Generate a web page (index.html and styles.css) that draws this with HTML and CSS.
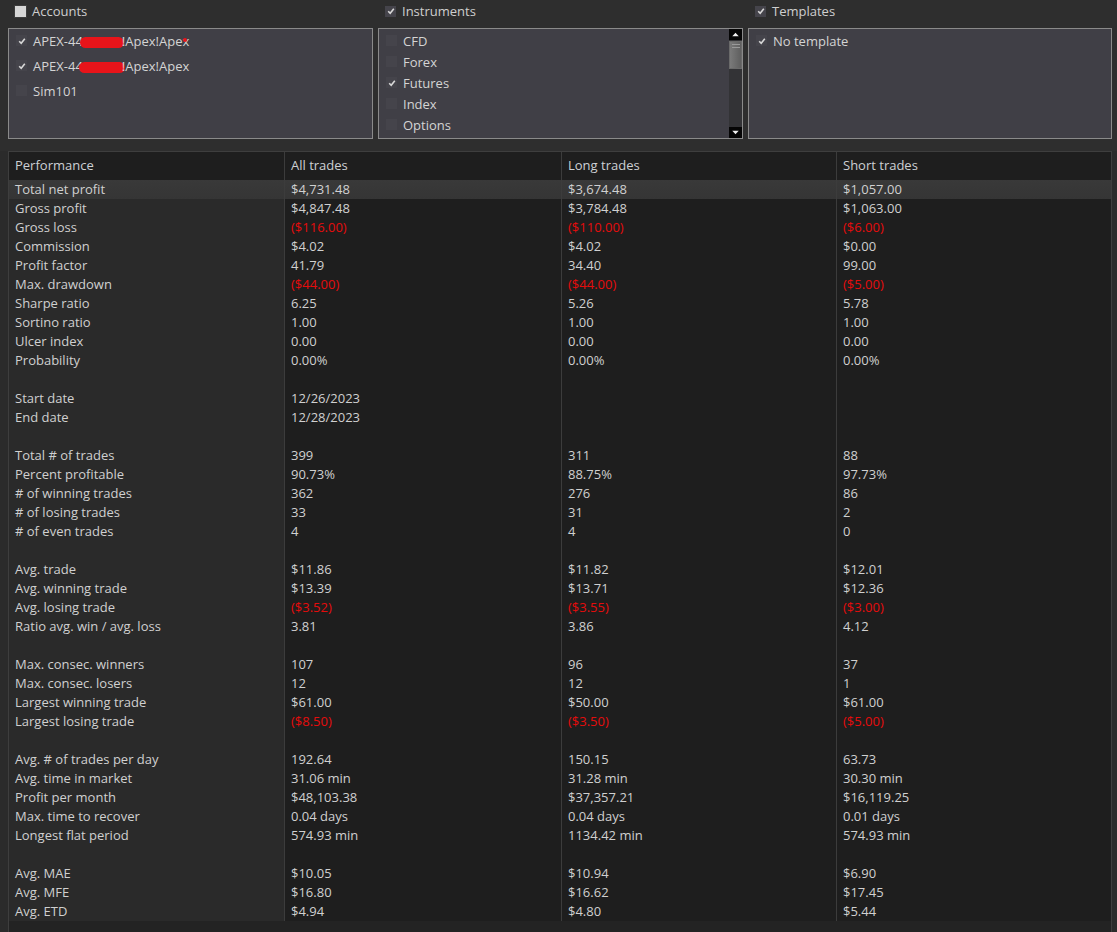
FILE: index.html
```html
<!DOCTYPE html>
<html>
<head>
<meta charset="utf-8">
<link rel="stylesheet" href="styles.css">
</head>
<body>
<div class="top">
  <div class="group">
    <div class="ghead"><span class="cb cb-ind"></span><span class="glabel">Accounts</span></div>
    <div class="box">
      <div class="item acc"><span class="cb cb-on"><svg viewBox="0 0 10 10"><path d="M2.2 5.2 L4.2 7.2 L7.8 2.8" /></svg></span><span class="itxt">APEX-44<span class="redact r1"></span>!Apex!Ape<span class="xred">x<span class="dot"></span></span></span></div>
      <div class="item acc"><span class="cb cb-on"><svg viewBox="0 0 10 10"><path d="M2.2 5.2 L4.2 7.2 L7.8 2.8" /></svg></span><span class="itxt">APEX-44<span class="redact r2"></span>!Apex!Apex</span></div>
      <div class="item acc"><span class="cb"></span><span class="itxt">Sim101</span></div>
    </div>
  </div>
  <div class="group">
    <div class="ghead"><span class="cb cb-on"><svg viewBox="0 0 10 10"><path d="M2.2 5.2 L4.2 7.2 L7.8 2.8" /></svg></span><span class="glabel">Instruments</span></div>
    <div class="box box-scroll">
      <div class="list">
        <div class="item ins"><span class="cb"></span><span class="itxt">CFD</span></div>
        <div class="item ins"><span class="cb"></span><span class="itxt">Forex</span></div>
        <div class="item ins"><span class="cb cb-on"><svg viewBox="0 0 10 10"><path d="M2.2 5.2 L4.2 7.2 L7.8 2.8" /></svg></span><span class="itxt">Futures</span></div>
        <div class="item ins"><span class="cb"></span><span class="itxt">Index</span></div>
        <div class="item ins"><span class="cb"></span><span class="itxt">Options</span></div>
      </div>
      <div class="sbar">
        <div class="sbtn"><svg viewBox="0 0 13 12"><path d="M3 8 L6.5 4 L10 8 Z" /></svg></div>
        <div class="strack">
          <div class="sthumb"><span></span><span></span></div>
        </div>
        <div class="sbtn"><svg viewBox="0 0 13 12"><path d="M3 4 L6.5 8 L10 4 Z" /></svg></div>
      </div>
    </div>
  </div>
  <div class="group">
    <div class="ghead"><span class="cb cb-on"><svg viewBox="0 0 10 10"><path d="M2.2 5.2 L4.2 7.2 L7.8 2.8" /></svg></span><span class="glabel">Templates</span></div>
    <div class="box">
      <div class="item acc"><span class="cb cb-on"><svg viewBox="0 0 10 10"><path d="M2.2 5.2 L4.2 7.2 L7.8 2.8" /></svg></span><span class="itxt">No template</span></div>
    </div>
  </div>
</div>

<div class="grid">
  <div class="row head"><div class="c">Performance</div><div class="c">All trades</div><div class="c">Long trades</div><div class="c">Short trades</div></div>
  <div class="row sel"><div class="c">Total net profit</div><div class="c">$4,731.48</div><div class="c">$3,674.48</div><div class="c">$1,057.00</div></div>
  <div class="row"><div class="c">Gross profit</div><div class="c">$4,847.48</div><div class="c">$3,784.48</div><div class="c">$1,063.00</div></div>
  <div class="row neg"><div class="c">Gross loss</div><div class="c">($116.00)</div><div class="c">($110.00)</div><div class="c">($6.00)</div></div>
  <div class="row"><div class="c">Commission</div><div class="c">$4.02</div><div class="c">$4.02</div><div class="c">$0.00</div></div>
  <div class="row"><div class="c">Profit factor</div><div class="c">41.79</div><div class="c">34.40</div><div class="c">99.00</div></div>
  <div class="row neg"><div class="c">Max. drawdown</div><div class="c">($44.00)</div><div class="c">($44.00)</div><div class="c">($5.00)</div></div>
  <div class="row"><div class="c">Sharpe ratio</div><div class="c">6.25</div><div class="c">5.26</div><div class="c">5.78</div></div>
  <div class="row"><div class="c">Sortino ratio</div><div class="c">1.00</div><div class="c">1.00</div><div class="c">1.00</div></div>
  <div class="row"><div class="c">Ulcer index</div><div class="c">0.00</div><div class="c">0.00</div><div class="c">0.00</div></div>
  <div class="row"><div class="c">Probability</div><div class="c">0.00%</div><div class="c">0.00%</div><div class="c">0.00%</div></div>
  <div class="row"><div class="c"></div><div class="c"></div><div class="c"></div><div class="c"></div></div>
  <div class="row"><div class="c">Start date</div><div class="c">12/26/2023</div><div class="c"></div><div class="c"></div></div>
  <div class="row"><div class="c">End date</div><div class="c">12/28/2023</div><div class="c"></div><div class="c"></div></div>
  <div class="row"><div class="c"></div><div class="c"></div><div class="c"></div><div class="c"></div></div>
  <div class="row"><div class="c">Total # of trades</div><div class="c">399</div><div class="c">311</div><div class="c">88</div></div>
  <div class="row"><div class="c">Percent profitable</div><div class="c">90.73%</div><div class="c">88.75%</div><div class="c">97.73%</div></div>
  <div class="row"><div class="c"># of winning trades</div><div class="c">362</div><div class="c">276</div><div class="c">86</div></div>
  <div class="row"><div class="c"># of losing trades</div><div class="c">33</div><div class="c">31</div><div class="c">2</div></div>
  <div class="row"><div class="c"># of even trades</div><div class="c">4</div><div class="c">4</div><div class="c">0</div></div>
  <div class="row"><div class="c"></div><div class="c"></div><div class="c"></div><div class="c"></div></div>
  <div class="row"><div class="c">Avg. trade</div><div class="c">$11.86</div><div class="c">$11.82</div><div class="c">$12.01</div></div>
  <div class="row"><div class="c">Avg. winning trade</div><div class="c">$13.39</div><div class="c">$13.71</div><div class="c">$12.36</div></div>
  <div class="row neg"><div class="c">Avg. losing trade</div><div class="c">($3.52)</div><div class="c">($3.55)</div><div class="c">($3.00)</div></div>
  <div class="row"><div class="c">Ratio avg. win / avg. loss</div><div class="c">3.81</div><div class="c">3.86</div><div class="c">4.12</div></div>
  <div class="row"><div class="c"></div><div class="c"></div><div class="c"></div><div class="c"></div></div>
  <div class="row"><div class="c">Max. consec. winners</div><div class="c">107</div><div class="c">96</div><div class="c">37</div></div>
  <div class="row"><div class="c">Max. consec. losers</div><div class="c">12</div><div class="c">12</div><div class="c">1</div></div>
  <div class="row"><div class="c">Largest winning trade</div><div class="c">$61.00</div><div class="c">$50.00</div><div class="c">$61.00</div></div>
  <div class="row neg"><div class="c">Largest losing trade</div><div class="c">($8.50)</div><div class="c">($3.50)</div><div class="c">($5.00)</div></div>
  <div class="row"><div class="c"></div><div class="c"></div><div class="c"></div><div class="c"></div></div>
  <div class="row"><div class="c">Avg. # of trades per day</div><div class="c">192.64</div><div class="c">150.15</div><div class="c">63.73</div></div>
  <div class="row"><div class="c">Avg. time in market</div><div class="c">31.06 min</div><div class="c">31.28 min</div><div class="c">30.30 min</div></div>
  <div class="row"><div class="c">Profit per month</div><div class="c">$48,103.38</div><div class="c">$37,357.21</div><div class="c">$16,119.25</div></div>
  <div class="row"><div class="c">Max. time to recover</div><div class="c">0.04 days</div><div class="c">0.04 days</div><div class="c">0.01 days</div></div>
  <div class="row"><div class="c">Longest flat period</div><div class="c">574.93 min</div><div class="c">1134.42 min</div><div class="c">574.93 min</div></div>
  <div class="row"><div class="c"></div><div class="c"></div><div class="c"></div><div class="c"></div></div>
  <div class="row"><div class="c">Avg. MAE</div><div class="c">$10.05</div><div class="c">$10.94</div><div class="c">$6.90</div></div>
  <div class="row"><div class="c">Avg. MFE</div><div class="c">$16.80</div><div class="c">$16.62</div><div class="c">$17.45</div></div>
  <div class="row"><div class="c">Avg. ETD</div><div class="c">$4.94</div><div class="c">$4.80</div><div class="c">$5.44</div></div>
  <div class="filler"></div>
</div>
</body>
</html>
```

FILE: styles.css
```css
html, body {
  margin: 0;
  padding: 0;
  height: 932px;
  overflow: hidden;
}
body {
  background: #2b2b2b;
  font-family: "Open Sans", "Noto Sans", sans-serif;
  font-size: 13px;
  color: #d2d2d2;
}
.top {
  display: grid;
  grid-template-columns: 365px 365px 364px;
  column-gap: 5px;
  padding-left: 8px;
  height: 151px;
  background: #2e2e2e;
  box-sizing: border-box;
}
.ghead {
  height: 28px;
  display: flex;
  align-items: center;
  padding-left: 7px;
  padding-bottom: 6px;
  box-sizing: border-box;
}
.glabel {
  margin-left: 6px;
  color: #cfcfcf;
}
.cb {
  display: inline-flex;
  align-items: center;
  justify-content: center;
  width: 11px;
  height: 11px;
  background: #45444b;
  flex: none;
}
.cb svg {
  width: 10px;
  height: 10px;
}
.cb svg path {
  fill: none;
  stroke: #d8d8d8;
  stroke-width: 1.6;
}
.ghead .cb.cb-ind {
  background: #d6d6d6;
  box-shadow: 0 0 0 1px #3c3c3c;
}
.box {
  height: 111px;
  border: 1px solid #8a8a8a;
  background: #403f46;
  box-sizing: border-box;
  padding-top: 0;
}
.item {
  display: flex;
  align-items: center;
  padding-left: 7px;
  box-sizing: border-box;
}
.item.acc {
  height: 25px;
  padding-bottom: 2px;
}
.item.ins {
  height: 21px;
}
.itxt {
  margin-left: 6px;
  color: #d4d4d4;
  white-space: nowrap;
  position: relative;
}
.redact {
  display: inline-block;
  vertical-align: middle;
  height: 11px;
  background: #e8141a;
  border-radius: 6px;
}
.r1 {
  width: 44px;
  margin-left: -3px;
  margin-right: -2px;
}
.r2 {
  width: 46px;
  margin-left: -4px;
  margin-right: -3px;
}
.xred {
  position: relative;
}
.dot {
  position: absolute;
  left: 1px;
  top: 6px;
  width: 4px;
  height: 4px;
  border-radius: 2px;
  background: #e8141a;
}
.box-scroll {
  display: flex;
}
.box-scroll .list {
  flex: 1;
  padding-top: 1px;
}
.sbar {
  width: 13px;
  display: flex;
  flex-direction: column;
  background: #333336;
}
.sbtn {
  height: 11px;
  background: #050505;
  flex: none;
  display: flex;
}
.sbtn svg {
  width: 13px;
  height: 11px;
}
.sbtn svg path {
  fill: #f0f0f0;
}
.strack {
  flex: 1;
}
.sthumb {
  margin-top: 1px;
  height: 28px;
  background: linear-gradient(to right, #7a7a7a, #5f5f5f);
  border: 1px solid #6a6a6a;
  box-sizing: border-box;
  display: flex;
  flex-direction: column;
  align-items: flex-end;
  padding-top: 2px;
  padding-right: 1px;
  gap: 2px;
}
.sthumb span {
  width: 8px;
  height: 1px;
  background: #9a9a9a;
}
.grid {
  margin-left: 8px;
  width: 1104px;
  height: 781px;
  border: 1px solid #3e3e3e;
  border-bottom: none;
  box-sizing: border-box;
  background: #232323;
}
.row {
  display: grid;
  grid-template-columns: 275px 277px 275px 1fr;
  height: 19px;
  line-height: 19px;
}
.row .c {
  padding-left: 6px;
  background: #1e1e1e;
  white-space: nowrap;
  color: #d0d0d0;
}
.row .c + .c {
  border-left: 1px solid #3c3c3c;
}
.row .c:first-child {
  background: #2a2a2a;
}
.row.head {
  height: 28px;
  line-height: 27px;
}
.row.head .c {
  background: #1e1e1e;
  color: #cdd0d4;
}
.row.sel .c {
  background: linear-gradient(to bottom, #393939, #353535);
}
.row.neg .c + .c {
  color: #e50c0c;
}
.filler {
  height: 20px;
}
```
